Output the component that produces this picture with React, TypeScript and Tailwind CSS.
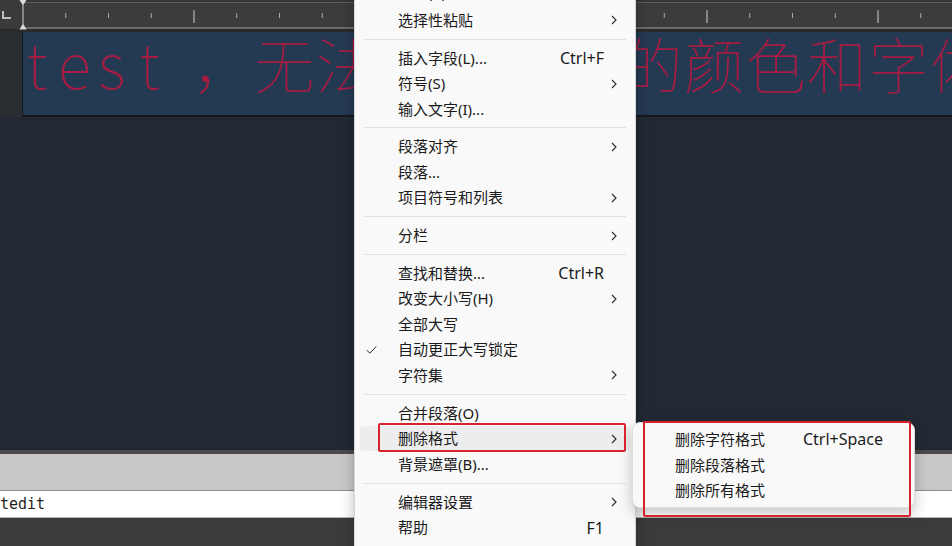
import React from "react";

type Row =
  | { kind: "sep" }
  | {
      kind: "item";
      label: string;
      shortcut?: string;
      sub?: boolean;
      checked?: boolean;
      active?: boolean;
      tall?: boolean;
    };

const mainMenu: Row[] = [
  { kind: "item", label: "粘贴(P)", tall: true },
  { kind: "item", label: "选择性粘贴", sub: true },
  { kind: "sep" },
  { kind: "item", label: "插入字段(L)...", shortcut: "Ctrl+F" },
  { kind: "item", label: "符号(S)", sub: true },
  { kind: "item", label: "输入文字(I)..." },
  { kind: "sep" },
  { kind: "item", label: "段落对齐", sub: true },
  { kind: "item", label: "段落..." },
  { kind: "item", label: "项目符号和列表", sub: true },
  { kind: "sep" },
  { kind: "item", label: "分栏", sub: true },
  { kind: "sep" },
  { kind: "item", label: "查找和替换...", shortcut: "Ctrl+R" },
  { kind: "item", label: "改变大小写(H)", sub: true },
  { kind: "item", label: "全部大写" },
  { kind: "item", label: "自动更正大写锁定", checked: true },
  { kind: "item", label: "字符集", sub: true },
  { kind: "sep" },
  { kind: "item", label: "合并段落(O)" },
  { kind: "item", label: "删除格式", sub: true, active: true },
  { kind: "item", label: "背景遮罩(B)..." },
  { kind: "sep" },
  { kind: "item", label: "编辑器设置", sub: true },
  { kind: "item", label: "帮助", shortcut: "F1" },
  { kind: "sep" },
  { kind: "item", label: "退出" },
];

const subMenu = [
  { label: "删除字符格式", shortcut: "Ctrl+Space" },
  { label: "删除段落格式" },
  { label: "删除所有格式" },
];

function Chevron() {
  return (
    <svg width="6" height="10" viewBox="0 0 6 10" className="shrink-0">
      <path d="M1 1l4 4-4 4" fill="none" stroke="#2a2a2a" strokeWidth="1.1" />
    </svg>
  );
}

function Check() {
  return (
    <svg width="11" height="8" viewBox="0 0 11 8">
      <path d="M0.8 4.2l3 3 6.4-6.6" fill="none" stroke="#2a2a2a" strokeWidth="1" />
    </svg>
  );
}

function Ruler() {
  const ticks = [];
  for (let n = 1; n < 22; n++) {
    const x = 1 + n * 42.75;
    const big = n % 4 === 0;
    ticks.push(
      <line
        key={n}
        x1={x}
        x2={x}
        y1={big ? 7 : 10}
        y2={big ? 20 : 15}
        stroke={big ? "#cfcfcf" : "#a8a8a8"}
        strokeWidth="1"
      />
    );
  }
  return (
    <div className="flex h-[32px] shrink-0">
      {/* corner */}
      <div className="w-[22px] flex flex-col">
        <div className="h-[29px] bg-[#3a3a3a] flex items-center pl-[2px]">
          <svg width="9" height="8" viewBox="0 0 9 8">
            <path d="M1 0v7h8" fill="none" stroke="#bdbdbd" strokeWidth="2" />
          </svg>
        </div>
        <div className="flex-1 bg-[#2a2a2a]" />
      </div>
      {/* ruler body */}
      <div className="relative flex-1 flex flex-col">
        <div className="h-[2px] bg-[#363636]" />
        <div className="h-[1px] bg-[#5c5c5c]" />
        <div className="h-[24px] bg-[#3c3c3c]">
          <svg width="930" height="24">
            {ticks}
          </svg>
        </div>
        <div className="h-[2px] bg-[#6b6b6b]" />
        <div className="flex-1 bg-[#2a2a2a]" />
        {/* indent markers */}
        <svg width="8" height="30" viewBox="0 0 8 30" className="absolute left-[-3px] top-0">
          <path d="M0.5 0h7L4 5.5z" fill="#dcdcdc" />
          <line x1="4" x2="4" y1="5" y2="24" stroke="#cfcfcf" strokeWidth="1" />
          <path d="M4 23.5L7.5 29.5h-7z" fill="#dcdcdc" />
        </svg>
      </div>
    </div>
  );
}

export default function App() {
  return (
    <div className="relative w-[952px] h-[546px] overflow-hidden bg-[#222932] flex flex-col font-['Noto_Sans','Noto_Sans_CJK_SC',sans-serif]">
      <Ruler />

      {/* editor */}
      <div className="flex-1 flex flex-col">
        <div className="flex h-[85px]">
          <div className="w-[22px] bg-[#2a2e33]" />
          <div className="flex-1 bg-[#243a52] border-l border-b-2 border-[#14181c] overflow-hidden">
            <div className="flex items-baseline -ml-[5px] whitespace-nowrap text-[#a81c44] leading-[60px] font-['Noto_Sans_CJK_SC',sans-serif] font-thin">
              {"test".split("").map((c, i) => (
                <span key={i} className="inline-block shrink-0 w-[37.5px] text-center text-[62px]">
                  {c}
                </span>
              ))}
              <span className="shrink-0 ml-[25px] text-[60px] tracking-[1.4px]">
                ，无法修改文字的颜色和字体
              </span>
            </div>
          </div>
        </div>
      </div>

      {/* status / command line */}
      <div className="h-[4px] bg-[#4a4a4a] shrink-0" />
      <div className="h-[36px] bg-[#c8c8c8] shrink-0" />
      <div className="h-[1px] bg-[#8c8c8c] shrink-0" />
      <div className="h-[26px] bg-white shrink-0 flex items-center font-['DejaVu_Sans_Mono',monospace] text-[15px] text-[#1e1e1e]">
        tedit
      </div>
      <div className="h-[1px] bg-[#b4b4b4] shrink-0" />
      <div className="h-[28px] bg-[#3b3b3b] shrink-0" />

      {/* context menu */}
      <div className="absolute left-[354px] top-[-23px] w-[282px] bg-[#f9f9f9] border border-[#d6d6d6] rounded-lg shadow-[0_4px_14px_rgba(0,0,0,0.28)] text-[15px] text-[#1a1a1a]">
        {mainMenu.map((r, i) =>
          r.kind === "sep" ? (
            <div key={i} className="h-[12.3px] flex items-center px-[9px]">
              <div className="h-px w-full bg-[#e1e1e1]" />
            </div>
          ) : (
            <div
              key={i}
              className={`${r.tall ? "h-[29.5px]" : "h-[25.5px]"} mx-[5px] pl-[6px] pr-[13px] flex items-center rounded ${
                r.active ? "bg-[#ededed]" : ""
              }`}
            >
              <div className="w-[32px] flex items-center">{r.checked && <Check />}</div>
              <div className="flex-1 leading-none whitespace-nowrap">{r.label}</div>
              {r.shortcut && (
                <div className="mr-[13px] text-[16px] leading-none">{r.shortcut}</div>
              )}
              {r.sub && <Chevron />}
            </div>
          )
        )}
      </div>

      {/* submenu */}
      <div className="absolute left-[632px] top-[422px] w-[283px] pt-[3.4px] pb-[3px] bg-[#f9f9f9] border border-[#dedede] rounded-lg shadow-[0_6px_14px_rgba(0,0,0,0.22)] text-[15px] text-[#1a1a1a]">
        {subMenu.map((s) => (
          <div key={s.label} className="h-[25.8px] mx-[5px] pl-[37px] pr-[13px] flex items-center">
            <div className="flex-1 leading-none whitespace-nowrap">{s.label}</div>
            {s.shortcut && (
              <div className="mr-[13px] text-[16px] leading-none">{s.shortcut}</div>
            )}
          </div>
        ))}
      </div>

      {/* annotation boxes */}
      <div className="absolute left-[378px] top-[423px] w-[248px] h-[29px] border-2 border-[#d6232f] rounded-[2px]" />
      <div className="absolute left-[643px] top-[421px] w-[268px] h-[96px] border-2 border-[#d6232f] rounded-[2px]" />
    </div>
  );
}
